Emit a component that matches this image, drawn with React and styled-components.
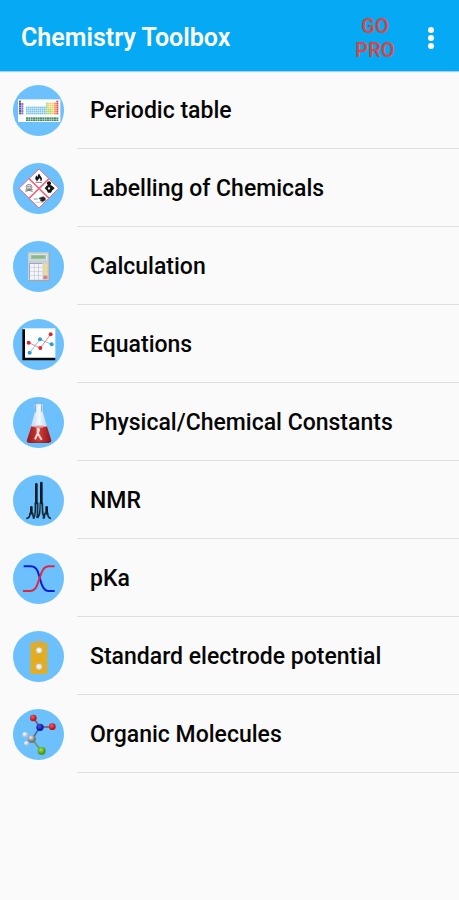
import React from "react";
import styled, { createGlobalStyle } from "styled-components";

const GlobalStyle = createGlobalStyle`
  * { box-sizing: border-box; }
  body {
    margin: 0;
    background: #fafafa;
    font-family: Roboto, "Liberation Sans", sans-serif;
  }
`;

const Screen = styled.div`
  display: flex;
  flex-direction: column;
  min-height: 100vh;
  background: #fafafa;
`;

const AppBar = styled.header`
  display: flex;
  align-items: center;
  padding: 8px 12px 4px 21px;
  min-height: 71px;
  background: #05a9f4;
  box-shadow: 0 1px 1px #a9cdec;
`;

const Title = styled.h1`
  flex: 1;
  margin: 0;
  color: #ffffff;
  font-size: 25px;
  line-height: 32px;
  font-weight: 600;
`;

const BarButton = styled.button`
  border: 0;
  padding: 0;
  background: none;
  font: inherit;
  cursor: pointer;
`;

const ProButton = styled(BarButton)`
  width: 56px;
  margin-right: 12px;
  color: #dc4540;
  font-size: 20px;
  line-height: 24px;
  font-weight: 600;
`;

const MenuButton = styled(BarButton)`
  display: grid;
  place-items: center;
  width: 32px;
  height: 40px;
`;

const MenuList = styled.ul`
  margin: 0;
  padding: 0;
  list-style: none;
`;

const Row = styled.li`
  display: block;
`;

const RowLink = styled.a`
  display: flex;
  align-items: center;
  gap: 13px;
  padding-left: 13px;
  color: #060606;
  text-decoration: none;
`;

const Badge = styled.svg`
  flex: none;
  display: block;
  width: 51px;
  height: 51px;
  border-radius: 50%;
  background: #6cc0fc;
`;

const Label = styled.span`
  flex: 1;
  padding: 24px 13px 22px;
  border-bottom: 1px solid #dfdfdf;
  font-size: 23px;
  line-height: 31px;
  font-weight: 500;
`;

function Icon({ top = 31, children }) {
  return (
    <Badge viewBox={`39 ${top} 153 153`} aria-hidden="true">
      {children}
    </Badge>
  );
}

const cells = (x, y, cols, rows, w, h, fill) =>
  Array.from({ length: cols * rows }, (_, i) => (
    <rect
      key={`${x}-${y}-${i}`}
      x={x + (i % cols) * w}
      y={y + Math.floor(i / cols) * h}
      width={w - 1}
      height={h - 1}
      fill={fill}
    />
  ));

const PeriodicIcon = () => (
  <Icon top={29}>
    <rect x="54" y="72" width="127" height="68" fill="#fcfdff" />
    {cells(57, 76, 1, 6, 7, 7, "#66549f")}
    {cells(64, 83, 1, 5, 7, 7, "#7d79bd")}
    {cells(78, 94, 10, 4, 6, 6, "#7bc4e6")}
    {cells(138, 82, 1, 6, 6, 6, "#a9d65c")}
    {cells(144, 82, 2, 3, 6, 6, "#f0cf70")}
    {cells(144, 100, 2, 3, 6, 6, "#b8d655")}
    {cells(156, 82, 1, 6, 6, 6, "#f0d15c")}
    {cells(162, 82, 1, 6, 7, 6, "#f39a60")}
    {cells(169, 76, 1, 7, 7, 6, "#e64a4d")}
    {cells(78, 126, 14, 2, 7, 6, "#468f6b")}
  </Icon>
);

const HazardIcon = () => (
  <Icon>
    <path d="M117 49 176 107 117 166 57 107Z" fill="#fff" stroke="#e56f87" strokeWidth="3" />
    <path d="M87 78 147 137M147 78 87 137" stroke="#e56f87" strokeWidth="5" />
    <path d="M112 86c-8-5-7-12-2-18 0 4 2 5 3 5 0-5 1-8 5-10 0 6 8 9 8 16 0 4-2 6-5 7 2-5-1-8-3-10 0 4-6 5-6 10Z" fill="#151515" />
    <path d="M107 89h19" stroke="#444" strokeWidth="2" />
    <ellipse cx="87" cy="103" rx="9" ry="8" fill="#d9d9d9" stroke="#777" strokeWidth="2" />
    <path d="M82 102h4m3 0h4M76 111l22 5M98 110l-22 6M83 109h8" stroke="#777" strokeWidth="3" />
    <path d="M142 88h9v9l6 3 7 7-7 6-4 7h-9l-4-7-6-6 6-8 4-2Z" fill="#151515" />
    <circle cx="147" cy="92" r="6" fill="#151515" />
    <path d="m147 102 4 5-4 6-4-6Z" fill="#e6e6e6" />
    <path d="M118 136l12-4 6 4v7l-9 4-7-4 4-3-6-1ZM101 139h12" fill="#222" stroke="#555" strokeWidth="2" />
    <path d="M106 149h26" stroke="#aaa" strokeWidth="2" />
  </Icon>
);

const CalculatorIcon = () => (
  <Icon>
    <rect x="84" y="65" width="66" height="87" rx="4" fill="#9fa9b3" />
    <rect x="84" y="65" width="62" height="83" rx="3" fill="#c9d0d5" />
    <rect x="89" y="70" width="53" height="19" rx="2" fill="#e2e7e6" />
    <rect x="92" y="73" width="46" height="13" fill="#99c59e" />
    <path d="M96 79h37" stroke="#79aa83" strokeWidth="3" />
    <rect x="87" y="97" width="40" height="49" fill="#9da8bd" />
    {cells(90, 100, 3, 4, 13, 12, "#f2f4fa")}
    {cells(130, 99, 1, 3, 13, 12, "#ecdb91")}
    <rect x="130" y="135" width="12" height="10" fill="#e27e80" />
  </Icon>
);

const ChartIcon = () => (
  <Icon>
    <rect x="69" y="59" width="97" height="93" fill="#fff" />
    <path d="M71 62v89h95" fill="none" stroke="#080808" strokeWidth="8" />
    <path d="m89 132 31-40 35 15" fill="none" stroke="#8bbfe0" strokeWidth="3" />
    <path d="m86 102 35 16 31-41" fill="none" stroke="#ef8585" strokeWidth="3" />
    <g fill="#2c9dce">
      <circle cx="89" cy="132" r="6" /><circle cx="120" cy="92" r="6" /><circle cx="155" cy="107" r="6" />
    </g>
    <g fill="#dc2830">
      <circle cx="86" cy="102" r="6" /><circle cx="121" cy="118" r="6" /><circle cx="152" cy="77" r="6" />
    </g>
  </Icon>
);

const FlaskIcon = () => (
  <Icon top={29}>
    <defs>
      <linearGradient id="glass" x1="0" x2="1">
        <stop offset="0" stopColor="#a6c8ed" /><stop offset=".5" stopColor="#f1f8ff" /><stop offset="1" stopColor="#a4c5e5" />
      </linearGradient>
      <linearGradient id="liquid" x1="0" x2="1">
        <stop offset="0" stopColor="#8f1a1d" /><stop offset=".5" stopColor="#d33c36" /><stop offset="1" stopColor="#8d1519" />
      </linearGradient>
    </defs>
    <path d="M104 47h24v27l26 84c1 5-2 8-7 8H87c-6 0-8-4-6-9l24-83Z" fill="url(#glass)" />
    <path d="M94 117q22 7 47 0l13 42c0 5-2 7-7 7H87c-6 0-8-4-6-9Z" fill="url(#liquid)" />
    <path d="M102 47q13 5 28 0M107 51v24M125 51v22" fill="none" stroke="#7da7d1" strokeWidth="3" />
    <path d="M94 117q23-5 47 0-23 7-47 0Z" fill="#e69a94" />
    <path d="M113 122v16l-8 18M113 138l12 19M118 123l-4 15" fill="none" stroke="#f6dede" strokeWidth="6" />
    <path d="M86 165h61" stroke="#651015" strokeWidth="2" />
  </Icon>
);

const NmrIcon = () => (
  <Icon>
    <g fill="none" stroke="#0c1c29" strokeWidth="8" strokeLinecap="round">
      <path d="M109 59v59M124 55v63" />
      <path d="M94 128v18M140 128v18" />
    </g>
    <g fill="none" stroke="#102a3d" strokeWidth="5" strokeLinecap="round">
      <path d="M81 161q9-1 9-15M98 145q0 11 4 15M135 146q-1 11-5 14M143 145q0 13 8 16M100 160q7-3 6-45M113 115q0 39-2 43M121 115q0 34-7 43M127 115q0 38 6 44" />
    </g>
    <path d="M110 118v33M123 118v31" stroke="#567e9b" strokeWidth="3" />
  </Icon>
);

const PkaIcon = () => (
  <Icon top={33}>
    <path d="M71 73h21q15 0 22 17l10 34q8 23 21 23h19" fill="none" stroke="#0c1dd3" strokeWidth="6" />
    <path d="M69 147h22q14 0 21-19l12-35q8-20 22-20h18" fill="none" stroke="#df2641" strokeWidth="6" />
  </Icon>
);

const BatteryIcon = () => (
  <Icon top={32}>
    <rect x="106" y="57" width="20" height="14" rx="3" fill="#a9b1aa" />
    <rect x="91" y="67" width="51" height="94" rx="2" fill="#e2ad20" />
    <path d="M92 68h49" stroke="#c6ac52" strokeWidth="3" />
    <g fill="#e5e6e4" stroke="#bfa75e" strokeWidth="2">
      <circle cx="117" cy="90" r="10" /><circle cx="117" cy="139" r="10" />
    </g>
    <path d="M113 90h8m-4-4v8M113 139h8" stroke="#fff" strokeWidth="3" />
  </Icon>
);

const MoleculeIcon = () => (
  <Icon>
    <defs>
      <radialGradient id="grayAtom" cx=".35" cy=".3"><stop stopColor="#eee" /><stop offset="1" stopColor="#747a80" /></radialGradient>
      <radialGradient id="whiteAtom" cx=".4" cy=".35"><stop stopColor="#fff" /><stop offset="1" stopColor="#bbc7d0" /></radialGradient>
      <radialGradient id="greenAtom" cx=".4" cy=".35"><stop stopColor="#a7e443" /><stop offset="1" stopColor="#4b9820" /></radialGradient>
      <radialGradient id="redAtom" cx=".4" cy=".35"><stop stopColor="#f65b5b" /><stop offset="1" stopColor="#bd141e" /></radialGradient>
      <radialGradient id="blueAtom" cx=".4" cy=".35"><stop stopColor="#4456e9" /><stop offset="1" stopColor="#101b9a" /></radialGradient>
    </defs>
    <g strokeWidth="5">
      <path d="m100 58 20 27" stroke="#80547c" /><path d="M120 85h37" stroke="#8b4768" />
      <path d="m120 85-24 37" stroke="#4d6598" /><path d="m96 122 29 35" stroke="#699866" />
      <path d="m75 108 21 14-17 12" fill="none" stroke="#a5b3bd" />
    </g>
    <circle cx="100" cy="58" r="10" fill="url(#redAtom)" />
    <circle cx="157" cy="84" r="10" fill="url(#redAtom)" />
    <circle cx="120" cy="86" r="11" fill="url(#blueAtom)" />
    <circle cx="75" cy="108" r="8" fill="url(#whiteAtom)" />
    <circle cx="96" cy="121" r="12" fill="url(#grayAtom)" />
    <circle cx="79" cy="134" r="7" fill="url(#whiteAtom)" />
    <circle cx="125" cy="157" r="12" fill="url(#greenAtom)" />
  </Icon>
);

const ITEMS = [
  ["Periodic table", PeriodicIcon],
  ["Labelling of Chemicals", HazardIcon],
  ["Calculation", CalculatorIcon],
  ["Equations", ChartIcon],
  ["Physical/Chemical Constants", FlaskIcon],
  ["NMR", NmrIcon],
  ["pKa", PkaIcon],
  ["Standard electrode potential", BatteryIcon],
  ["Organic Molecules", MoleculeIcon],
];

export default function App() {
  return (
    <Screen>
      <GlobalStyle />
      <AppBar>
        <Title>Chemistry Toolbox</Title>
        <ProButton type="button">GO PRO</ProButton>
        <MenuButton type="button" aria-label="More options">
          <svg width="8" height="24" viewBox="0 0 8 24" fill="#fff" aria-hidden="true">
            <circle cx="4" cy="4" r="3" />
            <circle cx="4" cy="12" r="3" />
            <circle cx="4" cy="20" r="3" />
          </svg>
        </MenuButton>
      </AppBar>
      <nav aria-label="Tools">
        <MenuList>
          {ITEMS.map(([label, Picture]) => (
            <Row key={label}>
              <RowLink href="#">
                <Picture />
                <Label>{label}</Label>
              </RowLink>
            </Row>
          ))}
        </MenuList>
      </nav>
    </Screen>
  );
}
